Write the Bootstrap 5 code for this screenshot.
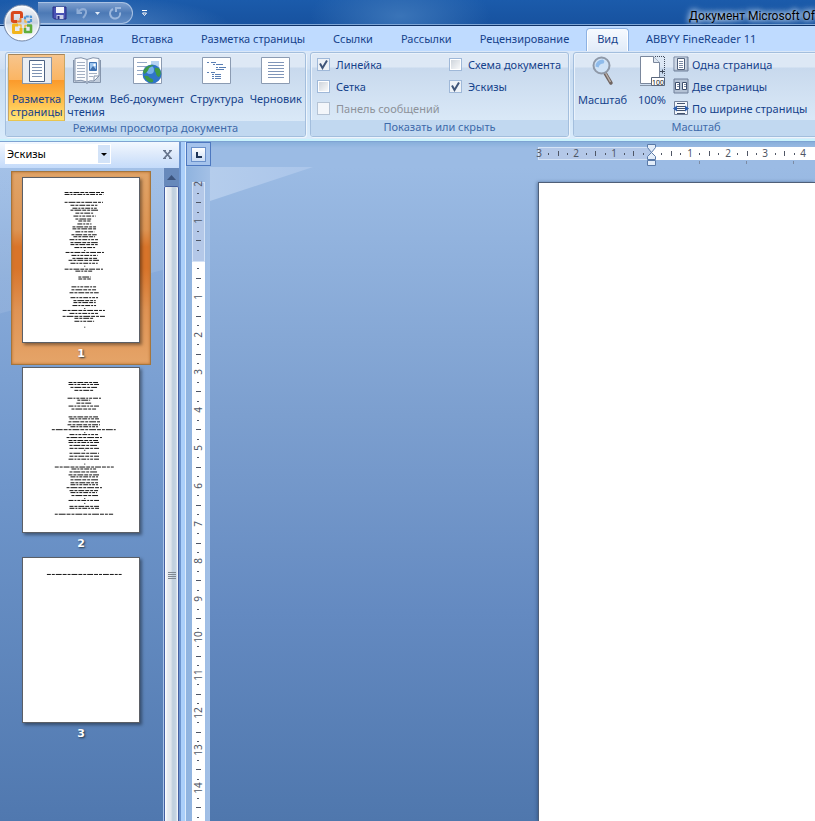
<!DOCTYPE html>
<html lang="ru">
<head>
<meta charset="utf-8">
<meta name="viewport" content="width=device-width, initial-scale=1">
<title>Документ Microsoft Office Word</title>
<link rel="stylesheet" href="https://cdn.jsdelivr.net/npm/bootstrap@5.3.0/dist/css/bootstrap.min.css">
<style>
  body { font: 11px/13px "Noto Sans", "Open Sans", sans-serif; color: #15428b; background: #9bbbe4; }
  button { color: inherit; font: inherit; }
  .titlebar { height: 26px; background: radial-gradient(ellipse 90px 40px at 400px 16px, #3a74b8 0, transparent 100%), radial-gradient(ellipse 140px 30px at 90px 26px, #4b7fbf, transparent), linear-gradient(#1b5bab, #17529f); border-bottom: 1px solid #0e3166; box-shadow: inset 0 -1px #7fa6d6; padding-left: 38px; }
  .quick { width: 95px; height: 22px; margin-top: 2px; padding-left: 14px; border: 1px solid #a9c2e4; border-left: 0; border-radius: 0 11px 11px 0; background: linear-gradient(#7d9fce, #4c79b5 50%, #658fc6); }
  .doc-title { font: 12px/16px Roboto, sans-serif; color: #000; text-shadow: 0 0 5px #e4eefa, 0 0 6px #cfe0f4, 0 0 8px #b9d0ee; }
  .orb { left: 3px; top: 4px; width: 38px; height: 38px; z-index: 3; }
  .tabstrip { height: 25px; background: #bfdbff; padding: 2px 0 0 46px; }
  .tab-link { height: 23px; padding: 4px 11px 0; margin: 0 3px; color: #15428b; text-decoration: none; }
  .tab-link.current { border: 1px solid #8db2e3; border-bottom: 0; padding: 3px 10px 0; border-radius: 4px 4px 0 0; background: linear-gradient(#f6faff, #e1ebf8); box-shadow: inset 1px 0 #fff, inset -1px 0 #fff; }
  .ribbon { height: 90px; padding: 1px 0 2px 5px; gap: 4px; background: linear-gradient(#dbe8f8, #cfe0f3 20%, #c6dbf1 22%, #d9ebfb); border-bottom: 2px solid #c8f2fc; }
  .group { border: 1px solid #a3bedd; border-radius: 3px; background: linear-gradient(#dde8f5 0 14px, #c8d9ed 15px, #d9e8f7 66px, #dfecf9); box-shadow: inset 1px 1px #eaf2fb, 1px 1px #eef5fc; }
  .group-name { height: 16px; line-height: 14px; color: #3e6aaa; background: #c1d8f0; border-radius: 0 0 2px 2px; }
  .views-group { width: 301px; }
  .show-group { width: 259px; }
  .zoom-group { width: 246px; }
  .big-row { padding: 1px 0 0 2px; }
  .big-btn { height: 67px; padding: 1px 0 0; border: 1px solid transparent; background: none; white-space: nowrap; }
  .big-btn svg { margin: 0 auto 7px; flex-shrink: 0; }
  .big-btn.on { border-color: #a6855a #c9a563 #e9c54f; background: linear-gradient(#f7c58d, #fbb563 38%, #fb9a2b 39%, #ffc351 75%, #ffe575); }
  .wrap { white-space: normal; }
  .w-layout { width: 57px; } .w-read { width: 42px; } .w-web { width: 80px; }
  .checks { padding: 0 6px; grid-template-columns: 132px 1fr; grid-auto-rows: 22px; }
  .check-row { gap: 6px; }
  .tick { appearance: none; width: 13px; height: 13px; margin: 0; border: 1px solid #9fb8d8; background: #fff linear-gradient(135deg, #cfd5dc, #f8f9fa) center/9px 9px no-repeat; }
  .tick:checked { background: url("data:image/svg+xml,%3Csvg xmlns='http://www.w3.org/2000/svg' viewBox='0 0 11 11'%3E%3Cpath d='M2 4.5L4.5 9L9 1.5' fill='none' stroke='%233f5579' stroke-width='2'/%3E%3C/svg%3E") center/11px 11px no-repeat, #eef2f7; }
  .tick:disabled { border-color: #b5c3d4; background: #f3f6fa; }
  .muted { color: #8d929a; }
  .small-btn { height: 22px; gap: 3px; padding: 0; border: 0; background: none; white-space: nowrap; }
  .workspace { min-height: 0; border-top: 1px solid #7ea3d2; }
  .thumb-pane { width: 181px; background: linear-gradient(#9fbfe8, #87aad9 20%, #6f96cb 50%, #5078af); border-right: 2px solid #6d95cf; }
  .pane-head { height: 26px; padding: 2px 6px 4px 5px; background: linear-gradient(#f3f8ff, #dce9fb 50%, #c4dbfa); }
  .pane-select { appearance: none; width: 106px; height: 20px; padding: 0 2px; border: 0; border-radius: 0; color: #000; font: 11px/18px "Noto Sans", sans-serif; background: url("data:image/svg+xml,%3Csvg xmlns='http://www.w3.org/2000/svg' viewBox='0 0 12 18'%3E%3Cpath fill='%23d3e3f8' d='M0 0h12v18H0z'/%3E%3Cpath d='M3 8h6L6 11z'/%3E%3C/svg%3E") right 1px top 1px/12px 18px no-repeat, #fff; }
  .icon-btn { border: 0; padding: 0; background: none; line-height: 0; }
  .thumbs { padding: 3px 0 0 11px; background: linear-gradient(165deg, #ffffff18 0 140px, transparent 141px); }
  .thumb-item { display: block; width: 140px; height: 194px; margin-bottom: -4px; padding: 5px 10px; border: 1px solid transparent; color: #fff; text-align: center; text-decoration: none; font: bold 11px/21px "DejaVu Sans", sans-serif; text-shadow: 1px 1px 2px #234; }
  .thumb-item.picked { border-color: #a5763d; background: linear-gradient(#e0a468, #dd9453 30%, #d8742a 39%, #d8742a 50%, #df9354 72%, #e5a468); box-shadow: inset 0 0 3px #b56d2c; }
  .thumb-item svg { display: block; width: 118px; height: 166px; background: #fff; border: 1px solid #5b5f66; box-shadow: 2px 2px 3px #0006; }
  .scroll-track { width: 16px; border-left: 1px solid #a8c3ea; }
  .scroll-up { height: 18px; background: #6789bb; }
  .scroll-thumb { border: 1px solid #445fa0; border-bottom: 0; border-radius: 2px 2px 0 0; background: linear-gradient(90deg, #fff, #e6eaf0 20%, #dfe5ec 45%, #bfcfdd 60%, #c7d5e3 85%, #fff); }
  .scroll-thumb::before { content: ""; flex: 8; }
  .scroll-thumb::after { content: ""; flex: 5; }
  .scroll-grip { width: 8px; height: 8px; background: repeating-linear-gradient(#7f8790 0 1px, transparent 1px 2px); }
  .splitter { width: 5px; background: #abcffa; border-right: 1px solid #deecfb; }
  .editor { background: linear-gradient(#9bbbe4, #9dbbe3); }
  .ruler-row { height: 25px; background: linear-gradient(#88afdb, #9bbbe4 6px); }
  .tab-kind { width: 25px; height: 24px; border: 1px solid #4d78c0; background: #a5c3ec; }
  .tab-kind span { width: 15px; height: 15px; border: 1px solid #6b91cb; background: linear-gradient(#fff, #c9dcf5); }
  .ruler-h { margin-left: 327px; min-width: 0; width: 0; }
  .ruler-col { width: 24px; background: linear-gradient(90deg, #8fb3df, #a3c0e6); padding: 15px 0 0 6px; }
  .ruler-h, .ruler-v { overflow: visible; }
  .canvas-area { padding: 15px 0 0 328px; background: linear-gradient(#9bbbe4, #7c9fcf 38%, #648ac1 68%, #4f77ad); position: relative; }
  .glare { left: 0; top: 0; width: 103px; height: 34px; background: linear-gradient(100deg, #b5cdec, #aac5ea); clip-path: polygon(0 0, 100% 0, 0 100%); }
  .sheet { border: 1px solid #4f5f78; border-width: 1px 0 0 1px; box-shadow: -1px 0 3px #24406a80; }
  .ruler-h text, .ruler-v text { font: 10px "Noto Sans", sans-serif; fill: #4f5665; text-anchor: middle; }
</style>
<script src="https://cdn.jsdelivr.net/npm/bootstrap@5.3.0/dist/js/bootstrap.bundle.min.js"></script>
</head>
<body class="vh-100 d-flex flex-column overflow-hidden position-relative">

<button class="orb position-absolute icon-btn" aria-label="Office">
  <svg width="38" height="38" viewBox="0 0 38 38">
    <defs><linearGradient id="orbFill" x1="0" y1="0" x2="0" y2="1"><stop offset="0" stop-color="#fafbfd"/><stop offset=".5" stop-color="#c7d0df"/><stop offset=".55" stop-color="#dbe3ed"/><stop offset="1" stop-color="#fff"/></linearGradient></defs>
    <circle cx="19" cy="19" r="18" fill="url(#orbFill)" stroke="#7388aa"/>
    <circle cx="19" cy="19" r="16.500" fill="none" stroke="#fff" opacity=".7"/>
    <g fill="none" stroke-linejoin="round">
      <path d="M14 17.500H10.500Q9.300 17.500 9.300 16V10Q9.300 8.500 10.800 8.500H17Q18.500 8.500 18.500 10V14" stroke="#d9481c" stroke-width="3"/>
      <path d="M14 17.500H17.500V14" stroke="#e98a3a" stroke-width="2"/>
      <path d="M22 15.500V12.500H28V18H24" stroke="#4f95d6" stroke-width="2.200" stroke-dasharray="3 .8"/>
      <path d="M15 21H10.500V28.500H18V24" stroke="#f2b51d" stroke-width="3"/>
      <path d="M24 21.500H28V28H22V24" stroke="#5fae3c" stroke-width="2.600"/>
      <path d="M15 21H18V24M22 24V21.500H24M22 15.500V18H24" stroke="#f0b84a" stroke-width="1.500"/>
    </g>
  </svg>
</button>

<header class="titlebar d-flex flex-shrink-0 overflow-hidden">
  <div class="quick d-flex align-items-center flex-shrink-0">
    <button class="icon-btn" aria-label="Сохранить"><svg width="16" height="16" viewBox="0 0 16 16"><path d="M1 2h13v12H2.500L1 12.500z" fill="#4a53b5" stroke="#262c82"/><path d="M4 2h8v6H4z" fill="#f4f6fc"/><path d="M4.500 10h7v4h-7z" fill="#c9cfe9"/><path d="M5.500 11h2v3h-2z" fill="#262c82"/></svg></button>
    <button class="icon-btn ms-2" aria-label="Отменить" disabled><svg width="14" height="14" viewBox="0 0 14 14"><path d="M2 6.500Q5 2 9 3.500Q12 6 7 12M1.500 2.500V7H6" fill="none" stroke="#8fadd6" stroke-width="2"/></svg></button>
    <button class="icon-btn ms-1" aria-label="Список отмены"><svg width="7" height="5" viewBox="0 0 7 5"><path d="M1 1h5L3.500 4z" fill="#e2ecf8"/></svg></button>
    <button class="icon-btn ms-2" aria-label="Повторить" disabled><svg width="14" height="14" viewBox="0 0 14 14"><path d="M4 3A5 5 0 1 0 11 6.500M7 6V2H12" fill="none" stroke="#9bb7dd" stroke-width="2"/></svg></button>
  </div>
  <button class="icon-btn ms-2 flex-shrink-0" aria-label="Настройка панели"><svg width="8" height="8" viewBox="0 0 8 8"><path d="M1 1.500h5" stroke="#fff"/><path d="M1.500 4h4L3.500 6.500z" fill="#23549c" stroke="#fff"/></svg></button>
  <div class="doc-title ms-auto mt-1 pt-1 text-nowrap">Документ Microsoft Of</div>
</header>

<nav class="tabstrip d-flex flex-shrink-0 text-nowrap">
  <a class="tab-link" href="#">Главная</a>
  <a class="tab-link" href="#">Вставка</a>
  <a class="tab-link" href="#">Разметка страницы</a>
  <a class="tab-link" href="#">Ссылки</a>
  <a class="tab-link" href="#">Рассылки</a>
  <a class="tab-link" href="#">Рецензирование</a>
  <a class="tab-link current" href="#" aria-current="page">Вид</a>
  <a class="tab-link" href="#">ABBYY FineReader 11</a>
</nav>

<section class="ribbon d-flex flex-shrink-0 overflow-hidden">
  <div class="group views-group d-flex flex-column flex-shrink-0">
    <div class="big-row d-flex flex-grow-1">
      <button class="big-btn on wrap w-layout d-flex flex-column flex-shrink-0"><svg width="31" height="29" viewBox="0 0 31 29"><rect x="1.500" y="1.500" width="29" height="26" fill="#e9edf3" stroke="#8b97a8"/><path d="M8.500 4.500h15v21h-15z" fill="#fff" stroke="#4d6283"/><path d="M11 8.500h10M11 11.500h10M11 14.500h10M11 17.500h10M11 20.500h10" stroke="#7e93b3"/></svg>Разметка страницы</button>
      <button class="big-btn wrap w-read d-flex flex-column align-items-center flex-shrink-0"><svg width="31" height="29" viewBox="0 0 31 29"><path d="M2.500 4v22.500h12l1.500 1 1.500-1h12V4" fill="#c3cedd" stroke="#8595ac"/><path d="M4 2.500q6-2 12 1 6-3 12-1V20l-5 5q-4-1-7 1-6-3-12-1z" fill="#fbfcfe" stroke="#8292aa"/><path d="M16 4v21M23 25v-5h5" fill="none" stroke="#8292aa"/><path d="M6 6.500h8M6 9.500h8M6 12.500h8M6 15.500h8M6 18.500h8M6 21.500h8M18 17.500h8M18 20.500h4" stroke="#a3afc2"/><path d="M18.500 6.500h7v8h-7z" fill="#9bc4ef" stroke="#3f73b3"/><path d="M19 14l3-4 3.500 4z" fill="#3e6fae"/><circle cx="23.500" cy="9" r="1.200" fill="#fff"/></svg>Режим чтения</button>
      <button class="big-btn w-web d-flex flex-column align-items-center flex-shrink-0"><svg width="31" height="29" viewBox="0 0 31 29"><path d="M1.500 1.500h28v26h-28z" fill="#fff" stroke="#8b9bb2"/><path d="M5 6.500h10M5 10.500h12M5 14.500h6M5 18.500h5" stroke="#94a8c6"/><path d="M19 5h8v6h-8z" fill="#b8d4f3"/><circle cx="20" cy="18" r="9.500" fill="#2f74c9"/><circle cx="18" cy="14" r="4" fill="#74b0ec"/><path d="M11 15q4-7 11-6-3 2-5 3-1 4-5 6zM23 12q4-1 5 2 2 4-1 7-3-1-3-4-2-2-1-5zM12 20q4-1 6 2 4 1 3 4-5 2-9-6z" fill="#3f9a45"/></svg>Веб-документ</button>
      <button class="big-btn px-0 d-flex flex-column align-items-center flex-fill"><svg width="31" height="29" viewBox="0 0 31 29"><path d="M1.500 1.500h28v26h-28z" fill="#fff" stroke="#8b9bb2"/><path d="M6 6.500h2M10 6.500h5M12 8.500h2M15 8.500h7M15 11.500h2M18 11.500h7M15 13.500h8M6 16.500h2M10 16.500h4M11 18.500h2M14 18.500h6M11 20.500h2M14 20.500h6M11 22.500h2M14 22.500h6" stroke="#5a7fb4"/></svg>Структура</button>
      <button class="big-btn px-0 d-flex flex-column align-items-center flex-fill"><svg width="31" height="29" viewBox="0 0 31 29"><path d="M1.500 1.500h28v26h-28z" fill="#fff" stroke="#8b9bb2"/><path d="M8 6.500h16M8 9.500h16M8 12.500h16M8 15.500h16M8 18.500h16M8 21.500h16" stroke="#8095b8"/></svg>Черновик</button>
    </div>
    <div class="group-name text-center">Режимы просмотра документа</div>
  </div>

  <div class="group show-group d-flex flex-column flex-shrink-0">
    <div class="checks d-grid flex-grow-1 align-content-start text-nowrap">
      <label class="check-row d-flex align-items-center"><input class="tick" type="checkbox" checked>Линейка</label>
      <label class="check-row d-flex align-items-center"><input class="tick" type="checkbox">Схема документа</label>
      <label class="check-row d-flex align-items-center"><input class="tick" type="checkbox">Сетка</label>
      <label class="check-row d-flex align-items-center"><input class="tick" type="checkbox" checked>Эскизы</label>
      <label class="check-row d-flex align-items-center muted"><input class="tick" type="checkbox" disabled>Панель сообщений</label>
    </div>
    <div class="group-name text-center">Показать или скрыть</div>
  </div>

  <div class="group zoom-group d-flex flex-column flex-shrink-0">
    <div class="d-flex flex-grow-1">
      <button class="big-btn w-layout d-flex flex-column align-items-center flex-shrink-0"><svg width="31" height="31" viewBox="0 0 31 31"><path d="M18 18l6 10" stroke="#6f6460" stroke-width="3.500" stroke-linecap="round"/><path d="M18.500 18l5 9" stroke="#b9afa8" stroke-width="1.500"/><circle cx="14.500" cy="10.500" r="8" fill="#cfe2f6" stroke="#8f99a8" stroke-width="2"/><path d="M8.500 11.500q0-6 7-7 3 1 1 4-4 0-5 4z" fill="#8fbbea"/></svg>Масштаб</button>
      <button class="big-btn w-read d-flex flex-column align-items-center flex-shrink-0"><svg width="27" height="31" viewBox="0 0 27 31"><path d="M1.500 1.500h13l6 6v21h-19z" fill="#fff" stroke="#7a879c"/><path d="M14.500 1.500v6h6" fill="#dfe7f1" stroke="#7a879c"/><path d="M16 1.500h9.500v21M1.500 30.500h11" fill="none" stroke="#3f4a5c" stroke-dasharray="1 1"/><path d="M21 16.500h4M23.500 14.500v4" stroke="#3f4a5c"/><path d="M12.500 22.500h13v8h-13z" fill="#fff" stroke="#59667b"/><text x="19" y="29.500" font-size="7" text-anchor="middle" font-family="Noto Sans" fill="#111">100</text></svg>100%</button>
      <div class="d-flex flex-column">
        <button class="small-btn d-flex align-items-center"><svg width="16" height="16" viewBox="0 0 16 16"><path d="M1 1h14v14H1z" fill="#a9b7ca" stroke="#71809a"/><path d="M1.500 1.500h12v12h-12z" fill="#cdd7e5"/><path d="M4.500 2.500h7v11h-7z" fill="#fff" stroke="#50607a"/><path d="M6 5.500h4M6 7.500h4M6 9.500h4M6 11.500h4" stroke="#7c8ba4"/></svg>Одна страница</button>
        <button class="small-btn d-flex align-items-center"><svg width="16" height="16" viewBox="0 0 16 16"><path d="M1 1h14v14H1z" fill="#b4c2d5" stroke="#71809a"/><path d="M2.500 4.500h4v7h-4zM9.500 4.500h4v7h-4z" fill="#fff" stroke="#3d4f6d"/><path d="M4 6.500h2M4 8.500h2M11 6.500h2M11 8.500h2" stroke="#7c8ba4"/></svg>Две страницы</button>
        <button class="small-btn d-flex align-items-center"><svg width="16" height="16" viewBox="0 0 16 16"><path d="M1.500 1.500h13v13h-13z" fill="#f4f7fb" stroke="#71809a"/><path d="M4 3.500h8M4 6.500h8M4 8.500h8M4 10.500h8M4 13.500h8" stroke="#42536e"/><path d="M0 8.500l4-3v6zM16 8.500l-4-3v6z" fill="#2d5fb0"/></svg>По ширине страницы</button>
      </div>
    </div>
    <div class="group-name text-center">Масштаб</div>
  </div>
</section>

<main class="workspace d-flex flex-grow-1">
  <aside class="thumb-pane d-flex flex-column flex-shrink-0">
    <div class="pane-head d-flex justify-content-between align-items-center flex-shrink-0">
      <select class="pane-select" aria-label="Панель"><option>Эскизы</option></select>
      <button class="icon-btn" aria-label="Закрыть"><svg width="11" height="11" viewBox="0 0 11 11"><path d="M2 1.500l7 8M9 1.500l-7 8" stroke="#66748c" stroke-width="1.800"/><path d="M1 1.500h3M7 1.500h3M1 9.500h3M7 9.500h3" stroke="#66748c"/></svg></button>
    </div>
    <div class="d-flex flex-grow-1 overflow-hidden">
      <div class="thumbs flex-grow-1">
        <a class="thumb-item picked" href="#"><svg viewBox="0 0 354 498" data-page="0"></svg>1</a>
        <a class="thumb-item" href="#"><svg viewBox="0 0 354 498" data-page="1"></svg>2</a>
        <a class="thumb-item" href="#"><svg viewBox="0 0 354 498" data-page="2"></svg>3</a>
      </div>
      <div class="scroll-track d-flex flex-column">
        <div class="scroll-up d-flex align-items-center justify-content-center"><svg width="9" height="5" viewBox="0 0 9 5"><path d="M0 5L4.500 0 9 5z" fill="#3c547d"/></svg></div>
        <div class="scroll-thumb flex-grow-1 d-flex flex-column align-items-center"><div class="scroll-grip"></div></div>
      </div>
    </div>
  </aside>
  <div class="splitter flex-shrink-0"></div>
  <div class="editor d-flex flex-column flex-grow-1 overflow-hidden">
    <div class="ruler-row d-flex flex-shrink-0">
      <button class="tab-kind d-flex align-items-center justify-content-center p-0 flex-shrink-0" aria-label="Тип табуляции"><span class="d-block"><svg class="d-block" width="13" height="13" viewBox="0 0 13 13"><path d="M5 4v5h5" fill="none" stroke="#1e3558" stroke-width="2"/></svg></span></button>
      <svg class="ruler-h flex-grow-1" height="25"></svg>
    </div>
    <div class="editor-body d-flex flex-grow-1 overflow-hidden">
      <div class="ruler-col flex-shrink-0"><svg class="ruler-v d-block" width="13" height="0"></svg></div>
      <div class="canvas-area flex-grow-1 d-flex">
        <div class="glare position-absolute"></div>
        <div class="sheet bg-white flex-grow-1"></div>
      </div>
    </div>
  </div>
</main>

<script>
  // Text rows of each thumbnail: [y, start, end] in thirds of a pixel; one value is a lone dot.
  const pages = [
    [[42,127,247],[48,127,245],[72,127,244],[81,145,227],[90,151,225],[96,145,232],[105,160,214],[114,154,222],[123,160,211],[129,169,206],[138,166,209],[147,151,223],[153,151,223],[162,160,218],[171,148,225],[177,154,220],[186,142,229],[195,145,228],[201,145,228],[210,157,220],[219],[225,130,247],[234,148,228],[243,151,226],[249,139,232],[258,145,228],[267],[276,127,244],[282,160,211],[300,169,207],[306,169,207],[330,148,223],[339,148,223],[348,142,231],[363,145,229],[372,154,222],[378,154,222],[387,151,223],[396],[402,121,250],[411,142,229],[420,121,250],[426,157,214],[435,157,217],[453]],
    [[42,139,229],[48,139,235],[57,145,226],[66,157,214],[90,136,241],[96,166,205],[105,163,208],[114,139,235],[123,148,223],[147,139,229],[153,142,232],[162,139,235],[171,136,235],[177,145,229],[186,88,283],[195],[201,142,229],[210,133,241],[219,139,229],[225,139,232],[234,142,229],[243,142,232],[249],[258,142,232],[267,142,232],[276,139,232],[291],[300,97,277],[306,148,223],[315,142,229],[324,139,232],[330,145,229],[339,145,229],[348,145,229],[354,145,229],[363,133,241],[372,142,229],[378,145,226],[387,148,229],[396],[402,139,235],[411],[420,142,232],[426,142,232],[444,97,275]],
    [[48,73,301]]
  ];
  const dashes = ["12 3 9 3 18 3", "15 3 6 3 9 3", "9 3 21 3 12 3"];
  document.querySelectorAll("[data-page]").forEach(svg => {
    svg.innerHTML = pages[svg.dataset.page].map(([y, a = 187, b = 190], i) =>
      `<path d="M${a} ${y + 1}H${b}" stroke="#111" stroke-width="3" stroke-dasharray="${dashes[i % 3]}"/>`).join("");
  });

  const unit = 37.8, ink = 'stroke="#4f5665"';
  const rulerH = document.querySelector(".ruler-h"), rulerV = document.querySelector(".ruler-v");

  function drawRulers() {
    const w = Math.floor(window.innerWidth - rulerH.getBoundingClientRect().left);
    const len = Math.floor(window.innerHeight - rulerV.getBoundingClientRect().top);
    rulerV.setAttribute("height", len);

    let h = `<rect x=".5" y="5.5" width="113" height="12" fill="#b4c8e8" stroke="#d5e3f6"/><rect x="113" y="5" width="${Math.max(0, w - 113)}" height="13" fill="#fff"/>`;
    for (let q = -12; 114 + q * unit / 4 < w - 6; q++) {
      const x = Math.round(114 + q * unit / 4);
      if (q === 0) continue;
      if (q % 4 === 0) h += `<text x="${x}" y="15">${Math.abs(q / 4)}</text>`;
      else h += q % 2 === 0 ? `<path d="M${x + .5} 9v5" ${ink}/>` : `<path d="M${x + .5} 11v2" ${ink}/>`;
    }
    for (let x = 161; x < w; x += 47) h += `<path d="M${x + .5} 19v3" stroke="#7c8ba4"/>`;
    h += '<path d="M109.500 2.500h8v3l-4 5 4 4v3h-8v-3l4-4-4-5z" fill="#e3edf9" stroke="#5a7aa8"/><path d="M109.500 18.500h8v5h-8z" fill="#e3edf9" stroke="#5a7aa8"/>';
    rulerH.innerHTML = h;

    let v = `<rect x=".5" y=".5" width="12" height="79" fill="#b4c8e8" stroke="#d5e3f6"/><rect x="0" y="80" width="13" height="${Math.max(0, len - 80)}" fill="#fff"/>`;
    for (let q = -8; 77 + q * unit / 4 < len - 3; q++) {
      const y = Math.round(77 + q * unit / 4);
      if (q === 0) continue;
      if (q % 4 === 0) v += `<text transform="translate(10 ${q === -8 ? y + 1 : y}) rotate(-90)">${Math.abs(q / 4)}</text>`;
      else v += q % 2 === 0 ? `<path d="M4 ${y + .5}h5" ${ink}/>` : `<path d="M5 ${y + .5}h2" ${ink}/>`;
    }
    rulerV.innerHTML = v;
  }
  drawRulers();
  window.addEventListener("resize", drawRulers);
</script>
</body>
</html>
